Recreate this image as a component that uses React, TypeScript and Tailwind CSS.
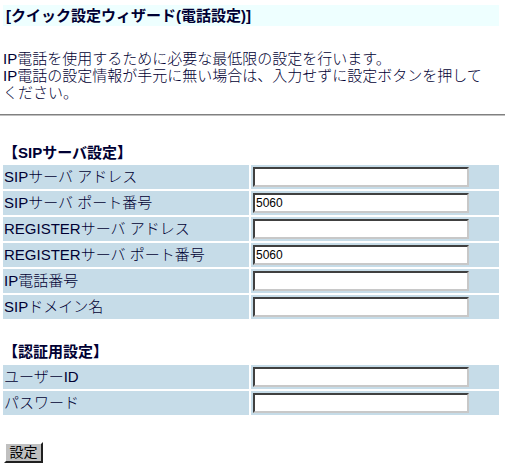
import React from "react";

const font = { fontFamily: '"Liberation Sans", "Noto Sans CJK JP", sans-serif' };

function Row({ label, value }: { label: string; value?: string }) {
  return (
    <>
      <div className="h-[24px] bg-[#c6dce8] text-[15px] font-light leading-[24px] text-[#000033] pl-[1px] whitespace-nowrap overflow-hidden">
        {label}
      </div>
      <div className="h-[24px] bg-[#c6dce8] flex items-start pt-[2px] pl-[2px]">
        <input
          type="text"
          defaultValue={value ?? ""}
          className="w-[216px] h-[20px] bg-white border-2 border-t-[#404040] border-l-[#404040] border-r-[#c8c8c8] border-b-[#c8c8c8] text-[12px] leading-[16px] text-black px-[1px] outline-none"
          style={font}
        />
      </div>
    </>
  );
}

export default function App() {
  return (
    <div className="w-[505px] h-[467px] bg-white overflow-hidden" style={font}>
      <div className="pl-[3px] pt-[5px]">
        <div className="w-[496px] h-[21px] bg-[#eeffff] pl-[3px] text-[15px] font-bold leading-[21px] text-[#000033] whitespace-nowrap">
          [クイック設定ウィザード(電話設定)]
        </div>
        <div className="mt-[24px] text-[15px] font-light leading-[17px] text-[#000033] whitespace-nowrap">
          IP電話を使用するために必要な最低限の設定を行います。
          <br />
          IP電話の設定情報が手元に無い場合は、入力せずに設定ボタンを押して
          <br />
          ください。
        </div>
      </div>
      <div className="mt-[13px] h-[2px] border-t border-t-[#808080] border-b border-b-[#c0c0c0]" />
      <div className="pl-[3px]">
        <div className="mt-[27px] h-[20px] text-[15px] font-bold leading-[20px] text-[#000033] whitespace-nowrap">
          【SIPサーバ設定】
        </div>
        <div className="mt-[2px] grid grid-cols-[246px_248px] gap-[2px]">
          <Row label="SIPサーバ アドレス" />
          <Row label="SIPサーバ ポート番号" value="5060" />
          <Row label="REGISTERサーバ アドレス" />
          <Row label="REGISTERサーバ ポート番号" value="5060" />
          <Row label="IP電話番号" />
          <Row label="SIPドメイン名" />
        </div>
        <div className="mt-[23px] h-[20px] text-[15px] font-bold leading-[20px] text-[#000033] whitespace-nowrap">
          【認証用設定】
        </div>
        <div className="mt-[3px] grid grid-cols-[246px_248px] gap-[2px]">
          <Row label="ユーザーID" />
          <Row label="パスワード" />
        </div>
        <div className="mt-[25px] pl-[1px]">
          <button
            type="button"
            className="w-[39px] h-[21px] bg-[#c0c0c0] border-2 border-t-white border-l-white border-r-[#202020] border-b-[#202020] text-[14px] leading-[16px] text-black"
            style={font}
          >
            設定
          </button>
        </div>
      </div>
    </div>
  );
}
